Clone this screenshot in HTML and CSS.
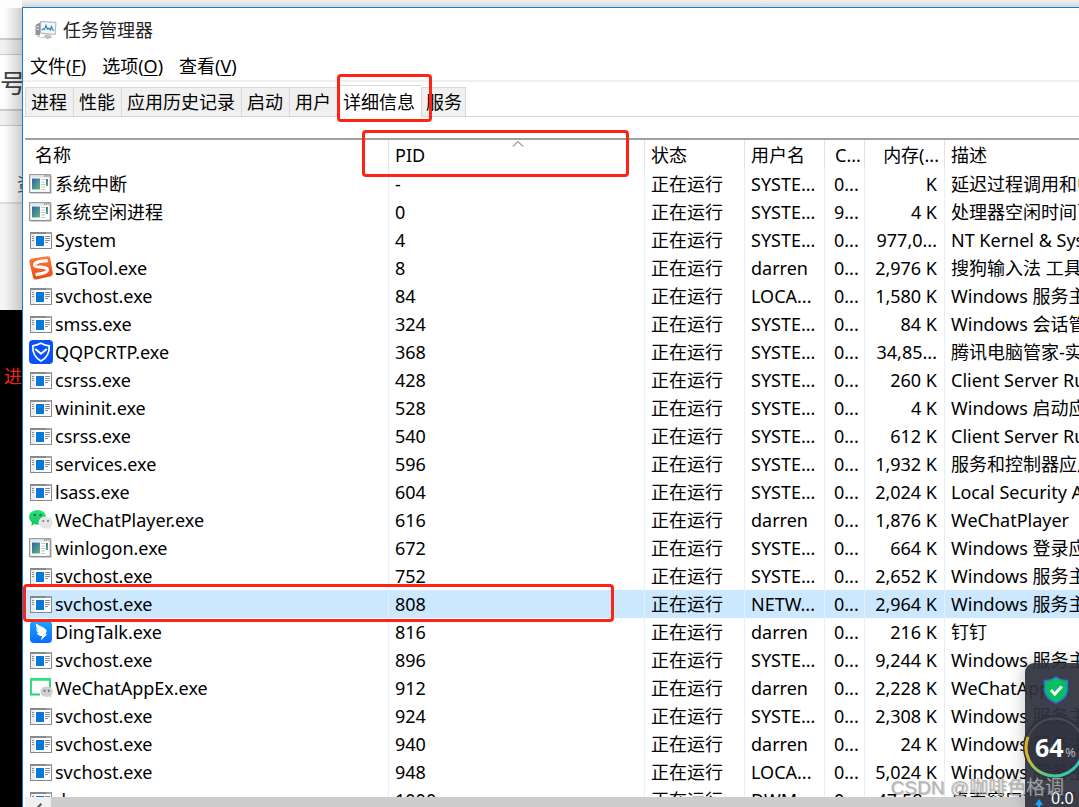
FILE: index.html
```
<!DOCTYPE html>
<html lang="zh-CN">
<head>
<meta charset="utf-8">
<title>任务管理器</title>
<link rel="stylesheet" href="styles.css">
</head>
<body>
<svg class="defs" aria-hidden="true">
  <defs>
    <linearGradient id="g-app" x1="0" y1="0" x2="1" y2="1"><stop offset="0" stop-color="#2c63a8"/><stop offset="1" stop-color="#62bb7c"/></linearGradient>
    <linearGradient id="g-sogou" x1="0" y1="0" x2="0" y2="1"><stop offset="0" stop-color="#ff7a3c"/><stop offset="1" stop-color="#ea4a12"/></linearGradient>
    <linearGradient id="g-ding" x1="0" y1="0" x2="0" y2="1"><stop offset="0" stop-color="#1aa5ff"/><stop offset="1" stop-color="#0a6cff"/></linearGradient>
    <linearGradient id="g-green" x1="0" y1="0" x2="0" y2="1"><stop offset="0" stop-color="#2fe07c"/><stop offset="1" stop-color="#10c25c"/></linearGradient>
    <linearGradient id="g-ring" x1="0" y1="0" x2="1" y2="0"><stop offset="0" stop-color="#e5b21f"/><stop offset=".12" stop-color="#9fc548"/><stop offset=".4" stop-color="#48c98c"/><stop offset="1" stop-color="#2fc7c0"/></linearGradient>
    <symbol id="i-app" viewBox="0 0 24 24">
      <path d="M2 21.5h20.500v-18" fill="none" stroke="#d4d4d4" stroke-width="1"/>
      <rect x=".7" y="2.700" width="20.600" height="17.800" fill="#fff" stroke="#8c9196" stroke-width="1.200"/>
      <rect x="1.200" y="3.200" width="19.600" height="2.300" fill="#dfe3e6"/>
      <path d="M15 4h1.300M17.200 4h1.300M19.400 4h1" stroke="#555" stroke-width="1.200"/>
      <rect x="3" y="6.500" width="8" height="11" fill="url(#g-app)"/>
      <path d="M12.300 7.500h4M12.300 10h3.500M12.300 12.500h4M12.300 15h4M12.300 17.500h4" stroke="#c4c4c4" stroke-width="1"/>
      <rect x="17" y="7" width="2" height="7" fill="url(#g-app)"/>
    </symbol>
    <symbol id="i-exe" viewBox="0 0 24 24">
      <rect x="1.500" y="4.500" width="21" height="16" fill="#fff" stroke="#85898d" stroke-width="1"/>
      <rect x="1" y="4" width="22" height="2" fill="#85898d"/>
      <path d="M17.500 5h1M19.500 5h1M21.300 5h1" stroke="#e8e8e8" stroke-width="1"/>
      <rect x="2" y="6" width="4" height="14" fill="#e8edf1"/>
      <path d="M3 8.500h2M3 10.500h2M3 12.500h2M16 8.500h5M16 10.500h5M16 12.500h5M16 14.500h3" stroke="#8d8d8d" stroke-width="1"/>
      <rect x="7" y="8" width="8" height="10" fill="#0878d8"/>
    </symbol>
    <symbol id="i-sogou" viewBox="0 0 24 24">
      <path d="M3 2.500 18.500.3q2.300-.2 2.800 1.900L23.800 17q.2 2.500-1.800 3.200L7.500 23.500q-2.700.3-3.400-1.800L.4 6q-.4-2.700 2.600-3.500Z" fill="url(#g-sogou)"/>
      <path d="M18.800 4.700Q5.200 5.200 5.600 9.400C6 12.500 18.300 9.700 18.500 13.700 18.700 17.300 11 18.200 6.600 18.700" fill="none" stroke="#fff" stroke-width="3.300"/>
    </symbol>
    <symbol id="i-qq" viewBox="0 0 24 24">
      <rect width="24" height="24" rx="4" fill="#0a50fb"/>
      <path d="M12 3.200q4.500 2.500 8.200 2.600C20.500 13 18 18 12 21 6 18 3.500 13 3.800 5.800 8 5.500 10 4.300 12 3.200Z" fill="none" stroke="#fff" stroke-width="1.700"/>
      <path d="m6.200 9 5.800 4.700L17.800 9" fill="none" stroke="#fff" stroke-width="2"/>
    </symbol>
    <symbol id="i-wechat" viewBox="0 0 24 24">
      <path d="M8.500 2C13.500 2 17 5 17 9s-3.500 7.500-8.500 7.500q-1.800 0-3.200-.5L2.300 18l.6-3.500Q0 12.500 0 9.300C0 5 3.700 2 8.500 2Z" fill="url(#g-green)"/>
      <circle cx="5.700" cy="7" r="1.200" fill="#13733a"/><circle cx="11.500" cy="7" r="1.200" fill="#13733a"/>
      <path d="M16.500 8.500c4 0 7.200 2.500 7.200 6 0 2-1 3.500-2.300 4.500l.3 2.500-2.500-1.300q-1.200.4-2.700.4c-4 0-7-2.600-7-6s3-6.100 7-6.100Z" fill="#e5e5e5"/>
      <circle cx="14.200" cy="13" r="1" fill="#777"/><circle cx="19" cy="13" r="1" fill="#777"/>
    </symbol>
    <symbol id="i-ding" viewBox="0 0 24 24">
      <rect x="1" y="1" width="22" height="22" rx="4" fill="url(#g-ding)"/>
      <path d="M7 3.500c3 2.300 9.500 4 10.500 7 .3 1.200-.4 2.600-1 3.700h1.700l-6.400 6.300 1.300-4.400h-1.900q-3-1-3.500-3.300l2 .4Q7.200 11.500 7 9l2 .9Q6.500 7.500 7 3.500Z" fill="#fff"/>
    </symbol>
    <symbol id="i-wxapp" viewBox="0 0 24 24">
      <path d="M11 18.500H2V3.200h19V12" fill="none" stroke="#27d47a" stroke-width="1.800"/>
      <path d="M1 3.500h21" stroke="#27e17f" stroke-width="2.500"/>
      <path d="M17.500 10.500c3.500 0 6.200 2.200 6.200 5.200q0 2.200-1.900 3.800l.2 2-2.200-1q-1 .4-2.300.4c-3.500 0-6-2.200-6-5.200s2.600-5.200 6-5.200Z" fill="#cfcfcf"/>
      <circle cx="15.500" cy="14.700" r="1" fill="#666"/><circle cx="19.800" cy="14.700" r="1" fill="#666"/>
    </symbol>
  </defs>
</svg>
<div class="desktop">
  <aside class="behind" aria-hidden="true">
    <div class="b-top"></div>
    <div class="b-band"></div>
    <div class="b-title">号</div>
    <div class="b-band"></div>
    <div class="b-card">资</div>
    <div class="b-gray"></div>
    <div class="b-black">进</div>
  </aside>
  <main class="window">
    <header class="titlebar">
      <svg class="logo" viewBox="0 0 22 20" aria-hidden="true">
        <path d="M.5 5 5 2.500v13L.5 15Z" fill="#8f9498"/><path d="m1.500 7 2.500-.7M1.500 9.500l2.500-.4" stroke="#e9e9e9"/>
        <path d="m5.500 1.500 15.500.8-.9 12.200-14.600-1.300Z" fill="#eceeef" stroke="#b0b3b6"/>
        <path d="m6.700 3 13 .6-.7 9.400-12.300-1.200Z" fill="#f4fbff"/>
        <path d="m6.700 10 1.500-1 1.300.5L11 5.500l1.500 3.700 1.500-1 1.200 1.800 1.300-3.500 1.200 3.500 1.300.3" fill="none" stroke="#2986bd" stroke-width="1.200"/>
        <path d="m10.500 14.300 4.500.4 2.500 2.600-5 2-4-2Z" fill="#bfc1c3"/><path d="M2 16q4 2 7 2" fill="none" stroke="#c8c8c8"/>
      </svg>
      <h1>任务管理器</h1>
    </header>
    <nav class="menu">
      <button>文件(<u>F</u>)</button><button>选项(<u>O</u>)</button><button>查看(<u>V</u>)</button>
    </nav>
    <div class="tabs" role="tablist">
      <button role="tab">进程</button><button role="tab">性能</button><button role="tab">应用历史记录</button><button role="tab">启动</button><button role="tab">用户</button><button role="tab" class="active" aria-selected="true">详细信息</button><button role="tab">服务</button>
    </div>
    <div class="list">
      <table>
        <colgroup><col class="c-name"><col class="c-pid"><col class="c-state"><col class="c-user"><col class="c-cpu"><col class="c-mem"><col class="c-desc"></colgroup>
        <thead><tr><th>名称</th><th>PID<svg class="sort" viewBox="0 0 12 6" aria-hidden="true"><path d="m1 5.500 5-5 5 5" fill="none" stroke="#555"/></svg></th><th>状态</th><th>用户名</th><th>C...</th><th>内存(...</th><th>描述</th></tr></thead>
        <tbody id="rows"></tbody>
      </table>
    </div>
    <div class="hscroll"><button aria-label="向左滚动"><svg viewBox="0 0 10 14" aria-hidden="true"><path d="M8 1 2 7l6 6" fill="none" stroke="#555" stroke-width="2.500"/></svg></button></div>
    <div class="mark mark-tab"></div>
    <div class="mark mark-pid"></div>
    <div class="mark mark-row"></div>
  </main>
  <section class="widget">
    <svg class="shield" viewBox="0 0 26 28" aria-hidden="true">
      <path d="M13 1q5 3.500 11.500 3.500V14q0 8-11.500 13Q1.500 22 1.500 14V4.500Q8 4.500 13 1Z" fill="#08bd62" stroke="#2f6fd6" stroke-width="1.500"/>
      <path d="m8 14 3.800 4 7-7.500" fill="none" stroke="#fff" stroke-width="3"/>
    </svg>
    <div class="gauge">
      <svg viewBox="0 0 64 64" aria-hidden="true">
        <circle cx="32" cy="32" r="30" fill="#2c2e3c" fill-opacity=".55" stroke="#30323f" stroke-width="4"/>
        <circle cx="32" cy="32" r="28.500" fill="none" stroke="#4a4c58" stroke-width="2"/>
        <path d="M5 22a28.500 28.500 0 1 0 54 18" fill="none" stroke="url(#g-ring)" stroke-width="3"/>
      </svg>
      <b>64</b><small>%</small>
    </div>
    <div class="speed"><svg viewBox="0 0 8 12" aria-hidden="true"><path d="M4 0 8 6H5.300v6H2.700V6H0Z" fill="#16a8ff"/></svg>0.0</div>
  </section>
  <div class="watermark">CSDN @咖啡色格调</div>
</div>
<script src="rows.js"></script>
</body>
</html>
```
FILE: rows.js
```
const run = '正在运行', svc = 'Windows 服务主进程';
const data = [
  ['app', '系统中断', '-', 'SYSTE...', '0...', 'K', '延迟过程调用和中断服务例程'],
  ['app', '系统空闲进程', '0', 'SYSTE...', '9...', '4 K', '处理器空闲时间百分比'],
  ['exe', 'System', '4', 'SYSTE...', '0...', '977,0...', 'NT Kernel & System'],
  ['sogou', 'SGTool.exe', '8', 'darren', '0...', '2,976 K', '搜狗输入法 工具'],
  ['exe', 'svchost.exe', '84', 'LOCA...', '0...', '1,580 K', svc],
  ['exe', 'smss.exe', '324', 'SYSTE...', '0...', '84 K', 'Windows 会话管理器'],
  ['qq', 'QQPCRTP.exe', '368', 'SYSTE...', '0...', '34,85...', '腾讯电脑管家-实时防护'],
  ['exe', 'csrss.exe', '428', 'SYSTE...', '0...', '260 K', 'Client Server Runtime Process'],
  ['exe', 'wininit.exe', '528', 'SYSTE...', '0...', '4 K', 'Windows 启动应用程序'],
  ['exe', 'csrss.exe', '540', 'SYSTE...', '0...', '612 K', 'Client Server Runtime Process'],
  ['exe', 'services.exe', '596', 'SYSTE...', '0...', '1,932 K', '服务和控制器应用'],
  ['exe', 'lsass.exe', '604', 'SYSTE...', '0...', '2,024 K', 'Local Security Authority'],
  ['wechat', 'WeChatPlayer.exe', '616', 'darren', '0...', '1,876 K', 'WeChatPlayer'],
  ['app', 'winlogon.exe', '672', 'SYSTE...', '0...', '664 K', 'Windows 登录应用程序'],
  ['exe', 'svchost.exe', '752', 'SYSTE...', '0...', '2,652 K', svc],
  ['exe', 'svchost.exe', '808', 'NETW...', '0...', '2,964 K', svc],
  ['ding', 'DingTalk.exe', '816', 'darren', '0...', '216 K', '钉钉'],
  ['exe', 'svchost.exe', '896', 'SYSTE...', '0...', '9,244 K', svc],
  ['wxapp', 'WeChatAppEx.exe', '912', 'darren', '0...', '2,228 K', 'WeChatAppEx'],
  ['exe', 'svchost.exe', '924', 'SYSTE...', '0...', '2,308 K', svc],
  ['exe', 'svchost.exe', '940', 'darren', '0...', '24 K', svc],
  ['exe', 'svchost.exe', '948', 'LOCA...', '0...', '5,024 K', svc],
  ['exe', 'dwm.exe', '1000', 'DWM...', '0...', '47,58...', '桌面窗口管理器']
];
const body = document.getElementById('rows');
for (const [icon, name, pid, ...rest] of data) {
  const tr = body.insertRow();
  if (pid === '808') tr.className = 'selected';
  const first = tr.insertCell();
  first.innerHTML = `<span class="proc"><svg class="icon" aria-hidden="true"><use href="#i-${icon}"/></svg><span>${name}</span></span>`;
  for (const text of [pid, run, ...rest]) tr.insertCell().textContent = text;
}
```
FILE: styles.css
```
* { box-sizing: border-box; }
body {
  margin: 0;
  overflow: hidden;
  color: #000;
  font: 18px/28px "Noto Sans", "Noto Sans CJK SC", sans-serif;
}
button { font: inherit; color: inherit; border: 0; padding: 0; background: none; }
.defs { position: absolute; width: 0; height: 0; }
.desktop {
  position: relative;
  display: flex;
  height: 100vh;
  overflow: hidden;
  background: linear-gradient(#f1f1f1, #d8d8d8 7px, #f4f4f4 8px);
}

/* content visible at the left of the window */
.behind {
  position: relative;
  flex: 0 0 22px;
  display: flex;
  flex-direction: column;
  overflow: hidden;
}
.behind::after {
  content: "";
  position: absolute;
  inset: 8px 0 0;
  background: linear-gradient(90deg, transparent 20%, rgba(0, 0, 0, .18));
}
.b-top { height: 38px; background: #fdfdfd; }
.b-band { height: 17px; background: #f1f1f1; border: solid #ccc; border-width: 2px 0 1px; }
.b-title { height: 54px; background: #fdfdfd; color: #444; font-size: 26px; line-height: 56px; }
.b-card { height: 78px; padding: 44px 0 0 17px; background: #fdfdfd; color: #555; border-bottom: 2px solid #ddd; }
.b-gray { height: 106px; background: #f4f4f4; }
.b-black { flex: 1; padding: 52px 0 0 4px; background: #000; color: #ff2a1a; }

.window {
  position: relative;
  flex: 1;
  min-width: 0;
  display: flex;
  flex-direction: column;
  margin-top: 7px;
  border: solid #1580cf;
  border-width: 1px 0 0 1px;
  background: #fff;
}
.titlebar { display: flex; align-items: center; gap: 6px; height: 44px; padding-left: 12px; }
.titlebar h1 { margin: 0; font-size: 18px; font-weight: 400; color: #222; }
.logo { width: 22px; height: 20px; }
.menu { display: flex; gap: 16px; height: 30px; padding-left: 7px; border-bottom: 2px solid #f0f0f0; }
.menu u { text-underline-offset: 2px; text-decoration-thickness: 1px; }
.tabs { display: flex; align-items: flex-end; height: 35px; padding-left: 2px; border-bottom: 1px solid #d9d9d9; }
.tabs button { height: 29px; padding: 0 6px 0 5px; background: #f0f0f0; border: 1px solid #d9d9d9; border-right: 0; border-bottom: 0; white-space: nowrap; }
.tabs button:last-child { padding: 0 3px 0 4px; border-right: 1px solid #d9d9d9; }
.tabs .active { height: 32px; padding: 0 6px 0 5px; background: #fff; border-right: 0; margin-bottom: -1px; line-height: 28px; }

.list {
  flex: 1;
  min-height: 0;
  overflow: hidden;
  margin: 21px 0 0 2px;
  border-top: 2px solid #a0a0a0;
}
table { table-layout: fixed; width: 100%; border-collapse: separate; border-spacing: 0; }
.c-name { width: 364px; }
.c-pid { width: 256px; }
.c-state { width: 100px; }
.c-user { width: 80px; }
.c-cpu { width: 40px; }
.c-mem { width: 80px; }
th, td {
  height: 28px;
  padding: 0 0 0 6px;
  overflow: hidden;
  border-right: 1px solid #e5f0fb;
  font-weight: 400;
  text-align: left;
  white-space: nowrap;
}
th { position: relative; height: 30px; border-right-color: #e3e3e3; }
th:first-child { padding-left: 10px; }
th:nth-child(5) { padding-left: 10px; }
td:nth-child(5) { padding-left: 9px; }
th:nth-child(6) { padding: 0 5px 0 0; text-align: right; }
td:nth-child(6) { padding: 0 7px 0 0; text-align: right; }
th:last-child, td:last-child { border-right: 0; }
td:first-child { padding-left: 4px; }
.proc { display: flex; align-items: center; gap: 2px; }
.icon { flex: none; width: 24px; height: 24px; }
.selected { background: #cce8ff; }
.sort { position: absolute; left: 123px; top: 1px; width: 12px; height: 6px; }
.hscroll { flex: 0 0 10px; overflow: hidden; margin-left: 2px; background: #cdcdcd; }
.hscroll button { display: block; width: 26px; height: 17px; padding: 6px 0 0 10px; background: #f0f0f0; }
.hscroll svg { display: block; width: 8px; height: 11px; }

/* red highlight frames */
.mark { position: absolute; border: 3px solid #ff2316; border-radius: 4px; pointer-events: none; }
.mark-tab { left: 314px; top: 66px; width: 95px; height: 48px; }
.mark-pid { left: 339px; top: 122px; width: 267px; height: 47px; }
.mark-row { left: 0; top: 576px; width: 591px; height: 38px; }

/* floating system monitor */
.widget {
  position: absolute;
  right: 0;
  bottom: 0;
  width: 54px;
  height: 144px;
  border-radius: 9px 0 0 0;
  background: rgba(46, 49, 61, .93);
  box-shadow: 0 0 18px rgba(0, 0, 0, .25);
  color: #fff;
}
.shield { position: absolute; left: 18px; top: 13px; width: 26px; height: 28px; }
.gauge { position: absolute; left: -2px; top: 52px; width: 64px; height: 64px; }
.gauge svg { position: absolute; inset: 0; }
.gauge b { position: absolute; left: 12px; top: 18px; font: 700 25px/28px "Open Sans", sans-serif; }
.gauge small { position: absolute; left: 42px; top: 27px; font-size: 13px; line-height: 20px; color: #b5b6bc; }
.speed { position: absolute; left: 10px; top: 125px; display: flex; gap: 8px; font-size: 16px; line-height: 20px; }
.speed svg { width: 8px; height: 12px; margin-top: 11px; }
.watermark {
  position: absolute;
  right: 15px;
  bottom: 5px;
  color: rgba(175, 175, 175, .85);
  font: 19px/28px "Liberation Sans", "Noto Sans CJK SC", sans-serif;
  text-shadow: 1px 1px 1px rgba(110, 110, 110, .45);
}
```
